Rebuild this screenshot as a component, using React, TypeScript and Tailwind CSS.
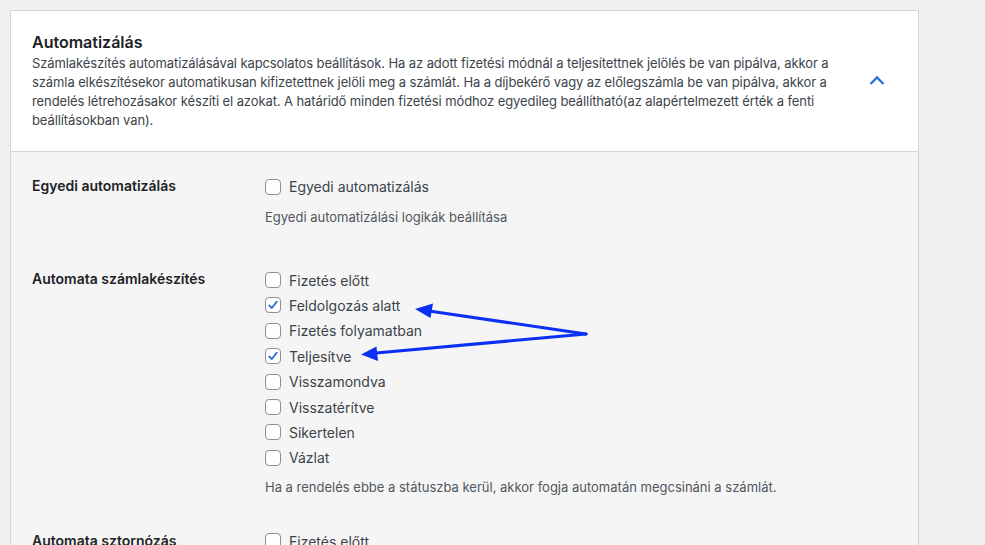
const invoiceStatuses = [
  { label: "Fizetés előtt", checked: false },
  { label: "Feldolgozás alatt", checked: true },
  { label: "Fizetés folyamatban", checked: false },
  { label: "Teljesítve", checked: true },
  { label: "Visszamondva", checked: false },
  { label: "Visszatérítve", checked: false },
  { label: "Sikertelen", checked: false },
  { label: "Vázlat", checked: false },
];

const Checkbox = ({ checked }: { checked: boolean }) => (
  <span className="flex h-4 w-4 shrink-0 items-center justify-center rounded-[4px] border border-[#8c8f94] bg-white">
    {checked && (
      <svg width="12" height="12" viewBox="0 0 12 12" fill="none">
        <path
          d="M2.2 6.4 L4.8 9 L9.8 2.6"
          stroke="#2c6fdc"
          strokeWidth="1.8"
          strokeLinecap="round"
          strokeLinejoin="round"
        />
      </svg>
    )}
  </span>
);

const CheckRow = ({ label, checked }: { label: string; checked: boolean }) => (
  <label className="flex h-[25.4px] items-center gap-2 text-[14px] text-[#3c434a]">
    <Checkbox checked={checked} />
    <span>{label}</span>
  </label>
);

export default function App() {
  return (
    <div
      className="min-h-screen bg-[#f0f0f0] pt-[10px] pl-[10px]"
      style={{ fontFamily: "Inter, 'Noto Sans', sans-serif" }}
    >
      <div className="relative w-[909px] border border-[#d4d4d4] bg-[#f5f5f5]">
        {/* Header */}
        <div className="flex items-center border-b border-[#d4d4d4] bg-white pl-[21px] pr-[31px] pt-[20px] pb-[21px]">
          <div className="flex-1">
            <h2 className="text-[16px] font-semibold leading-[22px] text-[#1d2327]">
              Automatizálás
            </h2>
            <p className="mt-[1px] text-[13px] leading-[19px] tracking-[-0.1px] text-[#3c434a]">
              Számlakészítés automatizálásával kapcsolatos beállítások. Ha az
              adott fizetési módnál a teljesítettnek jelölés be van pipálva,
              akkor a számla elkészítésekor automatikusan kifizetettnek jelöli
              meg a számlát. Ha a díjbekérő vagy az előlegszámla be van pipálva,
              akkor a rendelés létrehozásakor készíti el azokat. A határidő
              minden fizetési módhoz egyedileg beállítható(az alapértelmezett
              érték a fenti beállításokban van).
            </p>
          </div>
          <svg width="20" height="20" viewBox="0 0 20 20" className="ml-[20px] shrink-0">
            <path
              d="M3.5 13 L10 6.5 L16.5 13"
              stroke="#2c6fdc"
              strokeWidth="2.3"
              fill="none"
            />
          </svg>
        </div>

        {/* Body */}
        <div className="pl-[21px] pt-[24px]">
          <div className="flex">
            <div className="w-[233px] text-[14px] font-semibold leading-[20px] text-[#1d2327]">
              Egyedi automatizálás
            </div>
            <div className="-mt-[2px]">
              <CheckRow label="Egyedi automatizálás" checked={false} />
              <p className="mt-[8px] text-[13px] leading-[20px] text-[#50575e]">
                Egyedi automatizálási logikák beállítása
              </p>
            </div>
          </div>

          <div className="mt-[40px] flex">
            <div className="w-[233px] pt-[2px] text-[14px] font-semibold leading-[20px] text-[#1d2327]">
              Automata számlakészítés
            </div>
            <div>
              {invoiceStatuses.map((s) => (
                <CheckRow key={s.label} label={s.label} checked={s.checked} />
              ))}
              <p className="mt-[6px] text-[13px] leading-[20px] text-[#50575e]">
                Ha a rendelés ebbe a státuszba kerül, akkor fogja automatán
                megcsináni a számlát.
              </p>
            </div>
          </div>

          <div className="mt-[32px] flex">
            <div className="w-[233px] pt-[2px] text-[14px] font-semibold leading-[20px] text-[#1d2327]">
              Automata sztornózás
            </div>
            <div>
              <CheckRow label="Fizetés előtt" checked={false} />
              <CheckRow label="Feldolgozás alatt" checked={false} />
            </div>
          </div>
        </div>

        {/* Annotation arrows */}
        <svg
          className="pointer-events-none absolute left-0 top-0"
          width="909"
          height="535"
          viewBox="10 10 909 535"
        >
          <g stroke="#0b2ff5" strokeWidth="3" fill="#0b2ff5" strokeLinecap="round">
            <line x1="585" y1="333" x2="428" y2="310" />
            <line x1="585" y1="333" x2="375" y2="352" />
            <path d="M414 308 L432 302.5 L429.5 317 Z" stroke="none" />
            <path d="M360 353.5 L375.5 345.5 L377 360 Z" stroke="none" />
          </g>
        </svg>
      </div>
    </div>
  );
}
